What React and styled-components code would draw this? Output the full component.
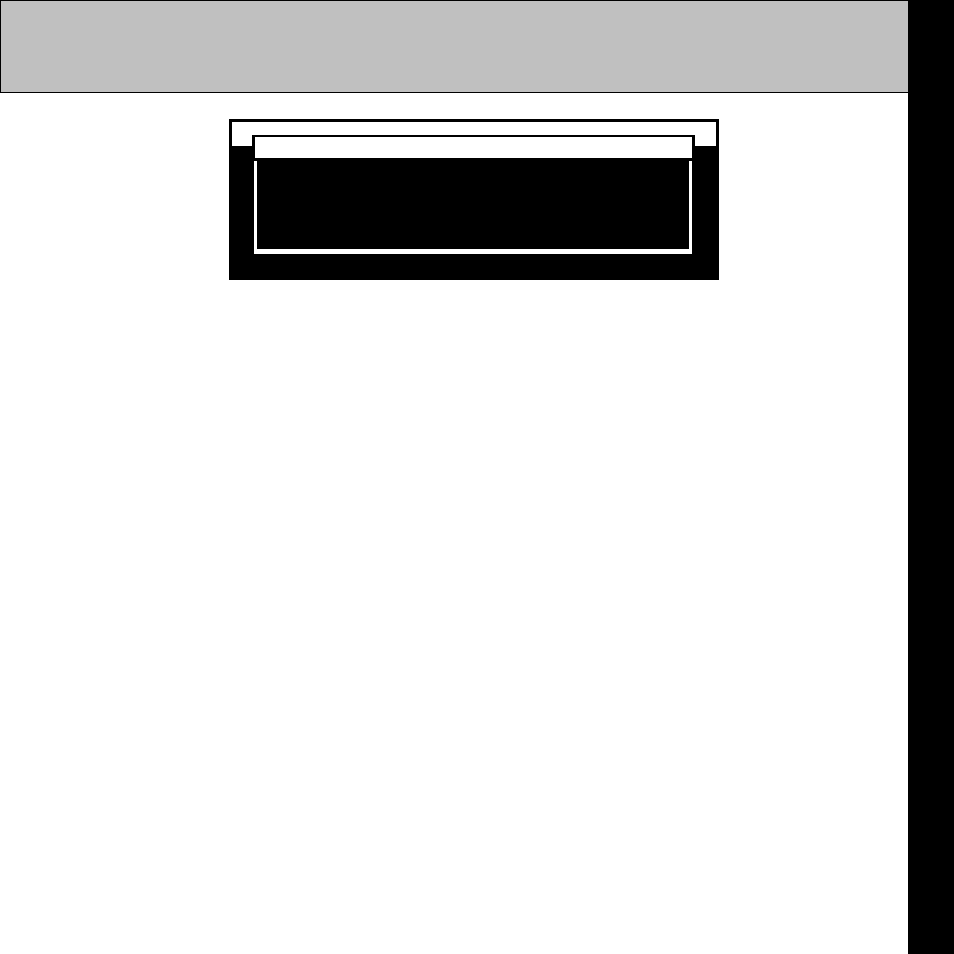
import React from 'react';
import styled, { createGlobalStyle } from 'styled-components';

const GlobalStyle = createGlobalStyle`
  * {
    box-sizing: border-box;
  }

  body {
    margin: 0;
    background: #fff;
    font-family: 'Liberation Sans', sans-serif;
  }
`;

const StyledPage = styled.div`
  display: flex;
  min-height: 100vh;
`;

const StyledContent = styled.div`
  flex: 1;
  min-width: 0;
`;

const StyledHeader = styled.header`
  height: 93px;
  border: 1px solid #000;
  border-right: 0;
  background: #c0c0c0;
`;

const StyledRail = styled.aside`
  flex: 0 0 46px;
  background: #000;
`;

const StyledMain = styled.main`
  display: flex;
  justify-content: center;
  padding: 26px 0 26px 40px;
`;

const StyledWindow = styled.section`
  flex: 0 1 490px;
  border: 3px solid #000;
  background: #000;
`;

const StyledTitleBar = styled.div`
  height: 24px;
  background: #fff;
`;

const StyledWindowBody = styled.div`
  display: flex;
  padding: 0 21px 23px 20px;
`;

// Rides up over the lower edge of the title bar
const StyledPanel = styled.div`
  flex: 1;
  margin-top: -11px;
  background: #000;
`;

const StyledPanelHeading = styled.div`
  height: 26px;
  border: 3px solid #000;
  border-top-width: 2px;
  background: #fff;
`;

const StyledPanelBody = styled.div`
  height: 93px;
  margin: 0 3px 0 2px;
  border: solid #fff;
  border-width: 0 3px 5px;
  background: #000;
`;

const App = () => (
  <>
    <GlobalStyle />
    <StyledPage>
      <StyledContent>
        <StyledHeader />
        <StyledMain>
          <StyledWindow>
            <StyledTitleBar />
            <StyledWindowBody>
              <StyledPanel>
                <StyledPanelHeading />
                <StyledPanelBody />
              </StyledPanel>
            </StyledWindowBody>
          </StyledWindow>
        </StyledMain>
      </StyledContent>
      <StyledRail />
    </StyledPage>
  </>
);

export default App;
